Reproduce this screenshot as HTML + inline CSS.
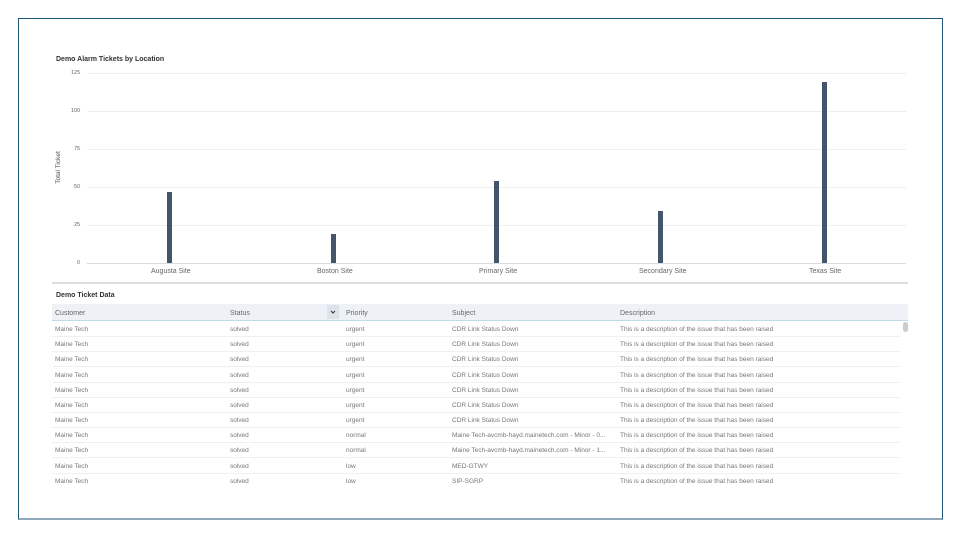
<!DOCTYPE html>
<html><head><style>
body{margin:0;width:960px;height:537px;background:#fff;font-family:"Liberation Sans",sans-serif;position:relative;overflow:hidden}
.frame{position:absolute;left:18px;top:18px;width:923px;height:499px;border:1px solid #22587a;border-bottom:2px solid #8fa9ba}
.t{position:absolute;font-size:7px;color:#666;white-space:nowrap}
.b{position:absolute;font-weight:bold;color:#333;font-size:7px}
.grid{position:absolute;left:87px;width:819px;height:1px;background:#eeeeee}
.bar{position:absolute;width:5px;background:#44546b}
.row{position:absolute;left:52px;width:848px;height:15px;border-bottom:1px solid #f0f0f0}
.row span{position:absolute;top:5px;font-size:6.5px;color:#777;white-space:nowrap}
</style></head><body>
<div class="frame"></div>
<div class="b" style="left:56px;top:56px">Demo Alarm Tickets by Location</div>
<div class="grid" style="top:73px"></div><div class="grid" style="top:111px"></div><div class="grid" style="top:149px"></div><div class="grid" style="top:187px"></div><div class="grid" style="top:225px"></div><div class="grid" style="top:263px;background:#d8dde3"></div>
<div class="t" style="left:71px;top:70px;font-size:5.5px">125</div>
<div class="t" style="left:71px;top:108px;font-size:5.5px">100</div>
<div class="t" style="left:74px;top:146px;font-size:5.5px">75</div>
<div class="t" style="left:74px;top:184px;font-size:5.5px">50</div>
<div class="t" style="left:74px;top:222px;font-size:5.5px">25</div>
<div class="t" style="left:77px;top:260px;font-size:5.5px">0</div>
<div class="t" style="left:42px;top:164px;transform:rotate(-90deg);font-size:6.5px;color:#555">Total Ticket</div>
<div class="bar" style="left:167px;top:192px;height:71px"></div>
<div class="bar" style="left:331px;top:234px;height:29px"></div>
<div class="bar" style="left:494px;top:181px;height:82px"></div>
<div class="bar" style="left:658px;top:211px;height:52px"></div>
<div class="bar" style="left:822px;top:82px;height:181px"></div>
<div class="t" style="left:151px;top:268px">Augusta Site</div>
<div class="t" style="left:317px;top:268px">Boston Site</div>
<div class="t" style="left:479px;top:268px">Primary Site</div>
<div class="t" style="left:639px;top:268px">Secondary Site</div>
<div class="t" style="left:809px;top:268px">Texas Site</div>
<div style="position:absolute;left:52px;top:282px;width:856px;height:2px;background:#ddd"></div>
<div class="b" style="left:56px;top:292px">Demo Ticket Data</div>
<div style="position:absolute;left:52px;top:304px;width:856px;height:16px;background:#eef2f6;border-bottom:1px solid #bfdbe8"></div>
<div class="t" style="left:55px;top:310px">Customer</div>
<div class="t" style="left:230px;top:310px">Status</div>
<div style="position:absolute;left:327px;top:305px;width:12px;height:14px;background:#dde3ea"><svg width="12" height="14"><path d="M4 6 L6 8 L8 6" stroke="#333" stroke-width="1" fill="none"/></svg></div>
<div class="t" style="left:346px;top:310px">Priority</div>
<div class="t" style="left:452px;top:310px">Subject</div>
<div class="t" style="left:620px;top:310px">Description</div>
<div style="position:absolute;left:903px;top:322px;width:5px;height:10px;border-radius:3px;background:#c8ccd2"></div>
<div class="row" style="top:321px"><span style="left:3px">Maine Tech</span><span style="left:178px">solved</span><span style="left:294px">urgent</span><span style="left:400px">CDR Link Status Down</span><span style="left:568px">This is a description of the issue that has been raised</span></div>
<div class="row" style="top:336px"><span style="left:3px">Maine Tech</span><span style="left:178px">solved</span><span style="left:294px">urgent</span><span style="left:400px">CDR Link Status Down</span><span style="left:568px">This is a description of the issue that has been raised</span></div>
<div class="row" style="top:351px"><span style="left:3px">Maine Tech</span><span style="left:178px">solved</span><span style="left:294px">urgent</span><span style="left:400px">CDR Link Status Down</span><span style="left:568px">This is a description of the issue that has been raised</span></div>
<div class="row" style="top:367px"><span style="left:3px">Maine Tech</span><span style="left:178px">solved</span><span style="left:294px">urgent</span><span style="left:400px">CDR Link Status Down</span><span style="left:568px">This is a description of the issue that has been raised</span></div>
<div class="row" style="top:382px"><span style="left:3px">Maine Tech</span><span style="left:178px">solved</span><span style="left:294px">urgent</span><span style="left:400px">CDR Link Status Down</span><span style="left:568px">This is a description of the issue that has been raised</span></div>
<div class="row" style="top:397px"><span style="left:3px">Maine Tech</span><span style="left:178px">solved</span><span style="left:294px">urgent</span><span style="left:400px">CDR Link Status Down</span><span style="left:568px">This is a description of the issue that has been raised</span></div>
<div class="row" style="top:412px"><span style="left:3px">Maine Tech</span><span style="left:178px">solved</span><span style="left:294px">urgent</span><span style="left:400px">CDR Link Status Down</span><span style="left:568px">This is a description of the issue that has been raised</span></div>
<div class="row" style="top:427px"><span style="left:3px">Maine Tech</span><span style="left:178px">solved</span><span style="left:294px">normal</span><span style="left:400px">Maine Tech-avcmb-hayd.mainetech.com - Minor - 0...</span><span style="left:568px">This is a description of the issue that has been raised</span></div>
<div class="row" style="top:442px"><span style="left:3px">Maine Tech</span><span style="left:178px">solved</span><span style="left:294px">normal</span><span style="left:400px">Maine Tech-avcmb-hayd.mainetech.com - Minor - 1...</span><span style="left:568px">This is a description of the issue that has been raised</span></div>
<div class="row" style="top:458px"><span style="left:3px">Maine Tech</span><span style="left:178px">solved</span><span style="left:294px">low</span><span style="left:400px">MED-GTWY</span><span style="left:568px">This is a description of the issue that has been raised</span></div>
<div class="row" style="top:473px;border:none"><span style="left:3px">Maine Tech</span><span style="left:178px">solved</span><span style="left:294px">low</span><span style="left:400px">SIP-SGRP</span><span style="left:568px">This is a description of the issue that has been raised</span></div>
</body></html>
